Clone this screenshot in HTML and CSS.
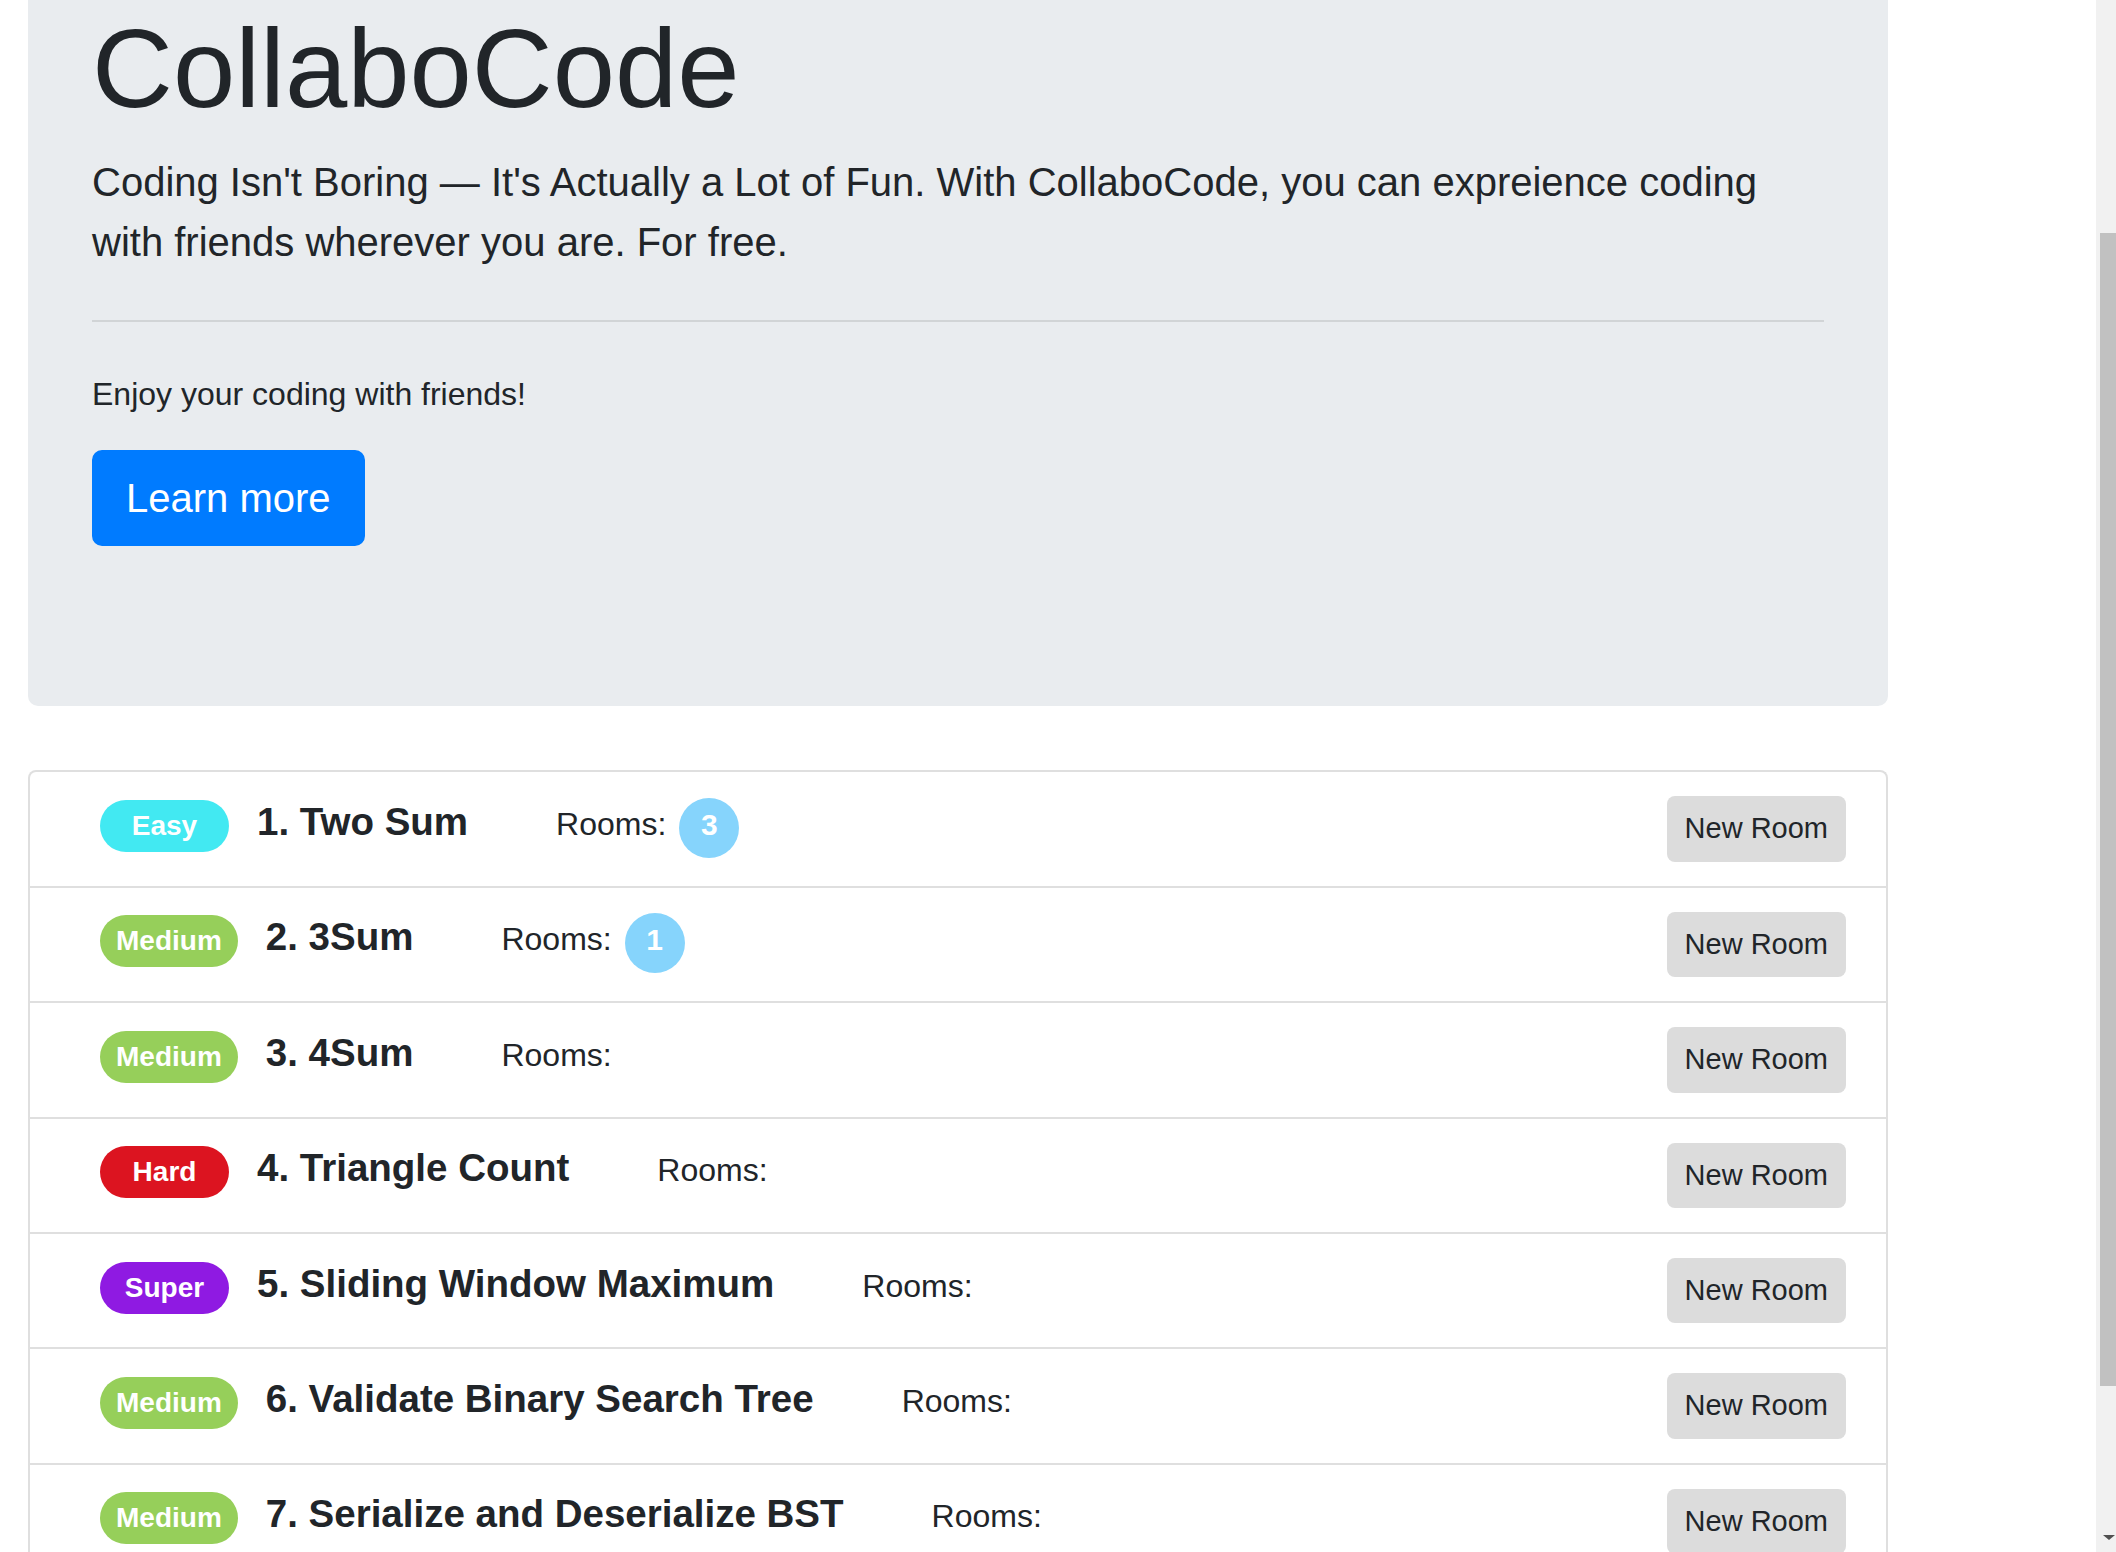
FILE: index.html
```html
<!DOCTYPE html>
<html lang="en">
<head>
<meta charset="utf-8">
<title>CollaboCode</title>
<link rel="stylesheet" href="styles.css">
</head>
<body>
<div class="page">
  <section class="jumbotron">
    <h1 class="display">CollaboCode</h1>
    <p class="lead">Coding Isn't Boring — It's Actually a Lot of Fun. With CollaboCode, you can expreience coding with friends wherever you are. For free.</p>
    <hr class="divider">
    <p class="enjoy">Enjoy your coding with friends!</p>
    <div class="cta"><a class="btn-primary" href="#">Learn more</a></div>
  </section>

  <ul class="problems">
    <li class="problem">
      <div class="info">
        <span class="level level-easy">Easy</span>
        <span class="title">1. Two Sum</span>
        <span class="rooms">Rooms:</span>
        <span class="count">3</span>
      </div>
      <button class="new-room">New Room</button>
    </li>
    <li class="problem">
      <div class="info">
        <span class="level level-medium">Medium</span>
        <span class="title">2. 3Sum</span>
        <span class="rooms">Rooms:</span>
        <span class="count">1</span>
      </div>
      <button class="new-room">New Room</button>
    </li>
    <li class="problem">
      <div class="info">
        <span class="level level-medium">Medium</span>
        <span class="title">3. 4Sum</span>
        <span class="rooms">Rooms:</span>
      </div>
      <button class="new-room">New Room</button>
    </li>
    <li class="problem">
      <div class="info">
        <span class="level level-hard">Hard</span>
        <span class="title">4. Triangle Count</span>
        <span class="rooms">Rooms:</span>
      </div>
      <button class="new-room">New Room</button>
    </li>
    <li class="problem">
      <div class="info">
        <span class="level level-super">Super</span>
        <span class="title">5. Sliding Window Maximum</span>
        <span class="rooms">Rooms:</span>
      </div>
      <button class="new-room">New Room</button>
    </li>
    <li class="problem">
      <div class="info">
        <span class="level level-medium">Medium</span>
        <span class="title">6. Validate Binary Search Tree</span>
        <span class="rooms">Rooms:</span>
      </div>
      <button class="new-room">New Room</button>
    </li>
    <li class="problem">
      <div class="info">
        <span class="level level-medium">Medium</span>
        <span class="title">7. Serialize and Deserialize BST</span>
        <span class="rooms">Rooms:</span>
      </div>
      <button class="new-room">New Room</button>
    </li>
  </ul>
</div>

<div class="scrollbar" aria-hidden="true">
  <div class="scrollbar-thumb"></div>
  <div class="scrollbar-arrow"></div>
</div>
</body>
</html>
```

FILE: styles.css
```css
html, body {
  margin: 0;
  padding: 0;
  overflow: hidden;
  background: #ffffff;
}

body {
  font-family: "Liberation Sans", Arial, Helvetica, sans-serif;
  color: #212529;
}

.page {
  width: 1860px;
  margin-left: 28px;
}

/* ---------- Jumbotron ---------- */
.jumbotron {
  background: #e9ecef;
  padding: 2px 64px 128px;
  border-radius: 0 0 10px 10px;
  margin-bottom: 64px;
}

.display {
  font-size: 112px;
  font-weight: 300;
  line-height: 1.2;
  margin: 0 0 16px;
}

.lead {
  font-size: 40px;
  font-weight: 300;
  line-height: 60px;
  margin: 0 0 32px;
}

.divider {
  margin: 48px 0;
  height: 0;
  border: 0;
  border-top: 2px solid rgba(0, 0, 0, 0.1);
}

.enjoy {
  font-size: 32px;
  line-height: 48px;
  margin: 0 0 32px;
}

.cta {
  display: flex;
  margin-bottom: 32px;
}

.btn-primary {
  display: inline-block;
  font-size: 40px;
  line-height: 60px;
  padding: 16px 32px;
  color: #ffffff;
  background: #007bff;
  border: 2px solid #007bff;
  border-radius: 10px;
  text-decoration: none;
}

/* ---------- Problem list ---------- */
.problems {
  list-style: none;
  margin: 0;
  padding: 0;
  border: 2px solid #dfdfdf;
  border-bottom: 0;
  border-radius: 8px 8px 0 0;
}

.problem {
  display: flex;
  align-items: flex-start;
  padding: 24px 40px 24px 70px;
  border-bottom: 2px solid #dfdfdf;
}

.info {
  flex: 1;
  display: flex;
  align-items: baseline;
  margin-top: 1.6px;
}

.level {
  display: block;
  box-sizing: border-box;
  min-width: 129px;
  margin-top: 2px;
  padding: 12px 16px;
  font-size: 28px;
  line-height: 28px;
  font-weight: 700;
  color: #ffffff;
  text-align: center;
  border-radius: 26px;
}

.level-easy { background: #42e9f2; }
.level-medium { background: #96cf5a; }
.level-hard { background: #dc1420; }
.level-super { background: #8f1ae2; }

.title {
  margin-left: 28px;
  font-size: 38.5px;
  line-height: 45px;
  font-weight: 700;
}

.rooms {
  margin-left: 88px;
  font-size: 32px;
  line-height: 48px;
}

.count {
  display: block;
  box-sizing: border-box;
  width: 60px;
  height: 60px;
  margin-left: 13px;
  padding-bottom: 6px;
  border-radius: 50%;
  background: #86d4fc;
  color: #ffffff;
  font-size: 30px;
  line-height: 54px;
  font-weight: 700;
  text-align: center;
}

.new-room {
  height: 65.4px;
  padding: 0 18px;
  border: 0;
  border-radius: 8px;
  background: #dcdcdc;
  color: #212529;
  font-family: "Liberation Sans", Arial, Helvetica, sans-serif;
  font-size: 29px;
  line-height: 65.4px;
}

/* ---------- Browser scrollbar ---------- */
.scrollbar {
  position: fixed;
  top: 0;
  right: 0;
  width: 20px;
  height: 100%;
  background: #f1f1f1;
}

.scrollbar-thumb {
  position: absolute;
  top: 233px;
  left: 4px;
  right: 0;
  height: 1153px;
  background: #c1c1c1;
}

.scrollbar-arrow {
  position: absolute;
  left: 7px;
  bottom: 12px;
  width: 0;
  height: 0;
  border-left: 6px solid transparent;
  border-right: 6px solid transparent;
  border-top: 5px solid #505050;
}
```
